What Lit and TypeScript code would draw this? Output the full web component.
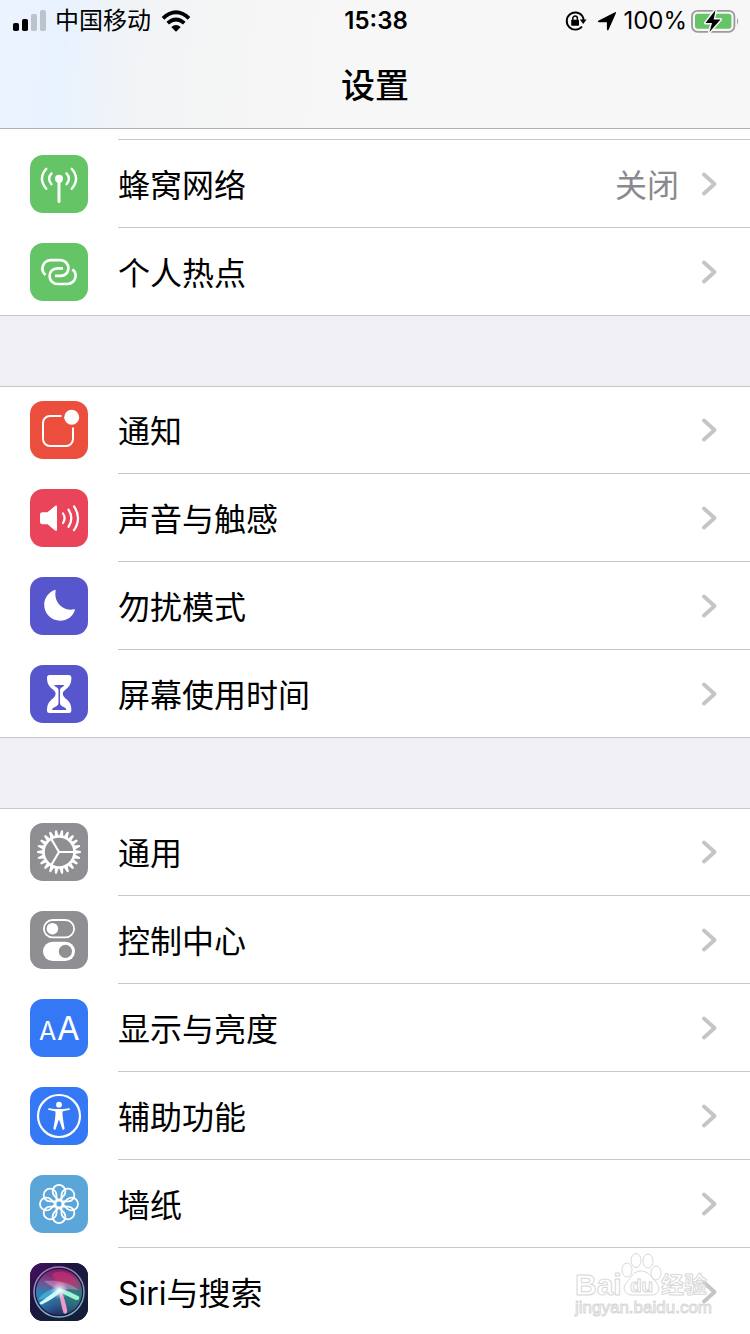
import { LitElement, html, svg, css, nothing, type TemplateResult } from "lit";
import { customElement, property } from "lit/decorators.js";

type Glyph = TemplateResult;

interface Item {
  label: string;
  tone: string;
  icon: Glyph;
  value?: string;
}

const teeth = Array.from({ length: 22 }, (_, i) => (i * 360) / 22);
const petals = Array.from({ length: 8 }, (_, i) => i * 45);

const icons: Record<string, Glyph> = {
  cellular: svg`
    <g fill="none" stroke="#fff" stroke-width="2.4" stroke-linecap="round">
      <path d="M29 25V46.6" stroke-width="3"/>
      <path d="M21.5 18.4Q16.8 23.7 21.5 29.2M16.3 13.8Q7.6 23.7 16.3 33.8"/>
      <path d="M36.5 18.4Q41.2 23.7 36.5 29.2M41.7 13.8Q50.4 23.7 41.7 33.8"/>
    </g>
    <circle cx="29" cy="23.8" r="4" fill="#fff"/>`,
  hotspot: svg`
    <g fill="none" stroke="#fff" stroke-width="2.7">
      <path d="M15.6 31.8C13.2 30 12.2 27.4 12.4 24.8C12.8 20.5 16.2 17.2 20.6 17.2H30.4C35 17.2 38.4 20.8 38.4 25.2C38.4 29.6 35.2 32.9 30.6 32.9H25"/>
      <path transform="rotate(180 29 29.1)" d="M15.6 31.8C13.2 30 12.2 27.4 12.4 24.8C12.8 20.5 16.2 17.2 20.6 17.2H30.4C35 17.2 38.4 20.8 38.4 25.2C38.4 29.6 35.2 32.9 30.6 32.9H25"/>
    </g>`,
  notifications: svg`
    <path d="M31.5 15H20a7 7 0 0 0-7 7V38a7 7 0 0 0 7 7H36a7 7 0 0 0 7-7V26.5" fill="none" stroke="#fff" stroke-width="2"/>
    <circle cx="41.7" cy="16.3" r="7.5" fill="#fff"/>`,
  sounds: svg`
    <path d="M12.5 23.3H17.5L25 17Q27 15.8 27 18V40.5Q27 42.7 25 41.5L17.5 35.2H12.5Q10 35.2 10 33V25.5Q10 23.3 12.5 23.3Z" fill="#fff"/>
    <g fill="none" stroke="#fff" stroke-width="2.2" stroke-linecap="round">
      <path d="M33 24.5Q36.2 29.2 33 34"/>
      <path d="M38.5 20.7Q44.2 29.2 38.5 37.8"/>
      <path d="M44 17.3Q52 29.2 44 41.2"/>
    </g>`,
  moon: svg`<path d="M24.6 13Q25.9 12.4 25.6 14C23.6 25 33 34.6 43.7 32.3Q45.3 32 44.8 33.5C42.6 39.6 37 43.7 30.3 43.7C21.4 43.7 14.2 36.7 14.2 27.8C14.2 21.2 18.6 15.2 24.6 13Z" fill="#fff"/>`,
  hourglass: svg`
    <path d="M19.5 10H39Q41.4 10 41.4 12.5C41.4 19 39.5 21.5 35.5 24.5Q32.8 26.5 32.8 29Q32.8 31.5 35.5 33.5C39.5 36.5 41.4 39 41.4 45.5Q41.4 48 39 48H19.5Q17 48 17 45.5C17 39 19 36.5 23 33.5Q25.6 31.5 25.6 29Q25.6 26.5 23 24.5C19 21.5 17 19 17 12.5Q17 10 19.5 10Z" fill="#fff"/>
    <path d="M24 20H34.4Q33.5 21.5 31.5 22.5Q30 23.5 30 25V38Q30 40.5 32.5 41.5Q36.5 43 36.3 45H22Q22 43 26 41.5Q28.5 40.5 28.5 38V25Q28.5 23.5 27 22.5Q25 21.5 24 20Z" fill="#5856cd"/>`,
  gear: svg`
    <g fill="#fff">
      ${teeth.map(
        (a) => svg`<path transform=${`rotate(${a} 29 29)`} d="M45 27L50.7 28Q51.4 29 50.7 30L45 31Z"/>`
      )}
    </g>
    <circle cx="29" cy="29" r="15.5" fill="none" stroke="#fff" stroke-width="2.6"/>
    <path d="M29 29H44M29 29L21.3 16M29 29L21.3 42" fill="none" stroke="#fff" stroke-width="2.2"/>`,
  toggles: svg`
    <rect x="13.9" y="9" width="30.2" height="17.4" rx="8.7" fill="none" stroke="#fff" stroke-width="1.8"/>
    <circle cx="22.4" cy="17.7" r="5.8" fill="#fff"/>
    <rect x="13" y="30.8" width="32" height="19.2" rx="9.6" fill="#fff"/>
    <circle cx="35.4" cy="40.4" r="6.6" fill="#8e8e93"/>`,
  letters: svg`
    <g class="letters" fill="#fff">
      <text x="9" y="41" font-size="25">A</text>
      <text x="27" y="41" font-size="33">A</text>
    </g>`,
  person: svg`
    <circle cx="29" cy="29" r="21" fill="none" stroke="#fff" stroke-width="2.2"/>
    <circle cx="29" cy="17.7" r="2.9" fill="#fff"/>
    <path d="M19 21.2Q29 23 39 21.2Q40.3 21.3 39.9 22.7L33 24.2Q32.4 24.5 32.5 26.5Q32.5 30 34.6 41.5Q34 43.2 32.5 42.5L29.4 33.2H28.6L25.5 42.5Q24 43.2 23.4 41.5Q25.5 30 25.5 26.5Q25.6 24.5 25 24.2L18.1 22.7Q17.7 21.3 19 21.2Z" fill="#fff"/>`,
  flower: svg`
    <g fill="none" stroke="#fff" stroke-width="1.8">
      <circle cx="29" cy="29" r="3.6"/>
      ${petals.map(
        (a) => svg`<path transform=${`rotate(${a} 29 29)`} d="M29 25.4L24.2 20.6A6.4 6.4 0 1 1 33.8 20.6Z"/>`
      )}
    </g>`,
  siri: svg`
    <defs>
      <linearGradient id="night" x1="0" y1="0" x2="1" y2="1">
        <stop offset="0" stop-color="#4b0f63"/><stop offset=".35" stop-color="#1d1440"/>
        <stop offset=".7" stop-color="#14203a"/><stop offset="1" stop-color="#151c36"/>
      </linearGradient>
      <linearGradient id="orb" x1=".5" y1="0" x2=".5" y2="1">
        <stop offset="0" stop-color="#7a1f68"/><stop offset=".35" stop-color="#953a80"/>
        <stop offset=".55" stop-color="#35689a"/><stop offset="1" stop-color="#262e6a"/>
      </linearGradient>
      <radialGradient id="teal" cx=".1" cy=".6" r=".5">
        <stop offset="0" stop-color="#2b86b8"/><stop offset="1" stop-color="#2b86b8" stop-opacity="0"/>
      </radialGradient>
      <radialGradient id="mint" cx=".85" cy=".6" r=".5">
        <stop offset="0" stop-color="#2c7f7a"/><stop offset="1" stop-color="#2c7f7a" stop-opacity="0"/>
      </radialGradient>
      <radialGradient id="glow">
        <stop offset="0" stop-color="#fff"/><stop offset=".3" stop-color="#e9f6ff" stop-opacity=".7"/>
        <stop offset="1" stop-color="#b8e6ff" stop-opacity="0"/>
      </radialGradient>
      <linearGradient id="ring" x1="0" y1="0" x2="0" y2="1">
        <stop offset="0" stop-color="#a578b0"/><stop offset="1" stop-color="#7fb3c9"/>
      </linearGradient>
    </defs>
    <rect width="58" height="58" fill="url(#night)"/>
    <circle cx="29" cy="29" r="23" fill="url(#orb)"/>
    <circle cx="29" cy="29" r="23" fill="url(#teal)"/>
    <circle cx="29" cy="29" r="23" fill="url(#mint)"/>
    <path d="M22 11C35 3 49 15 50 27C43 19 34 20 29 25Z" fill="#d8306f" opacity=".55"/>
    <path d="M14 18C25 17 38 18 49 27C41 26 34 26 29 28C24 24 18 22 14 18Z" fill="#e9a0cf" opacity=".45"/>
    <path d="M29 25C20 25 12 30 8 37C14 36 24 34 29 28Z" fill="#59cdf0" opacity=".5"/>
    <path d="M29 25.5L9.5 39.8Q9.5 42.3 12.3 41.3Q24 35.5 31 29Z" fill="#c9fbff"/>
    <path d="M28.5 26Q30.5 40 33.5 50Q37 52 37.3 48Q35 36 31 27Z" fill="#ef9aca"/>
    <path d="M29 25Q39 28 49 33.5Q50 37.5 46 37Q37 33 29 28.5Z" fill="#9df5d0"/>
    <circle cx="29.5" cy="27.5" r="9" fill="url(#glow)"/>
    <circle cx="29" cy="29" r="25" fill="none" stroke="url(#ring)" stroke-width="1.5"/>`,
};

const groups: Item[][] = [
  [
    { label: "蜂窝网络", tone: "green", icon: icons.cellular, value: "关闭" },
    { label: "个人热点", tone: "green", icon: icons.hotspot },
  ],
  [
    { label: "通知", tone: "red", icon: icons.notifications },
    { label: "声音与触感", tone: "pink", icon: icons.sounds },
    { label: "勿扰模式", tone: "indigo", icon: icons.moon },
    { label: "屏幕使用时间", tone: "indigo", icon: icons.hourglass },
  ],
  [
    { label: "通用", tone: "gray", icon: icons.gear },
    { label: "控制中心", tone: "gray", icon: icons.toggles },
    { label: "显示与亮度", tone: "blue", icon: icons.letters },
    { label: "辅助功能", tone: "blue", icon: icons.person },
    { label: "墙纸", tone: "sky", icon: icons.flower },
    { label: "Siri与搜索", tone: "night", icon: icons.siri },
  ],
];

@customElement("status-bar")
class StatusBar extends LitElement {
  static styles = css`
    :host {
      display: grid;
      grid-template-columns: 1fr auto 1fr;
      align-items: center;
      height: 40px;
      padding: 0 11px 0 13px;
      font-size: 24px;
      line-height: 40px;
    }
    .side {
      display: flex;
      align-items: center;
    }
    .left {
      gap: 9px;
    }
    .right {
      justify-content: flex-end;
      gap: 4px;
    }
    .text {
      padding-top: 1px;
    }
    .time {
      font-weight: 600;
    }
    .lock {
      margin-right: 6px;
    }
    .arrow {
      margin-right: 2px;
    }
    svg {
      display: block;
      flex: none;
    }
  `;

  render() {
    return html`
      <div class="side left">
        <svg width="33" height="22" viewBox="0 0 33 22" aria-hidden="true">
          <rect y="13" width="6" height="8" rx="1.8" />
          <rect x="9" y="9" width="6" height="12" rx="1.8" />
          <rect x="18" y="4" width="6" height="17" rx="1.8" fill="#bcc3cd" />
          <rect x="27" y="0" width="6" height="21" rx="1.8" fill="#bcc3cd" />
        </svg>
        <span class="text">中国移动</span>
        <svg width="32" height="22" viewBox="0 0 32 22" aria-hidden="true">
          <g fill="none" stroke="#000" stroke-width="3.8">
            <path d="M3 8.3Q16 -3.6 29 8.3" />
            <path d="M7.7 13.2Q16 5.8 24.3 13.2" />
          </g>
          <path d="M11.3 17Q16 13 20.7 17L16.6 21.2Q16 21.7 15.4 21.2Z" />
        </svg>
      </div>
      <span class="text time">15:38</span>
      <div class="side right">
        <svg class="lock" width="22" height="20" viewBox="0 0 22 20" aria-hidden="true">
          <path d="M17.3 5A8.6 8.6 0 1 0 17 15.5M17.3 5Q18.6 7 18.6 9.5" fill="none" stroke="#000" stroke-width="1.9" />
          <path d="M14.8 8.6H21.6L18.2 13Z" />
          <rect x="6.2" y="8.8" width="7.8" height="6" rx=".8" />
          <path d="M7.8 9V7.3a2.3 2.3 0 0 1 4.6 0V9" fill="none" stroke="#000" stroke-width="1.5" />
        </svg>
        <svg class="arrow" width="20" height="20" viewBox="0 0 20 20" aria-hidden="true">
          <path d="M1.3 9.7L18 1.2Q19.4 .8 18.9 2.2L11.6 18.8Q10.4 20.3 9.9 18.3V11.2H2.1Q0 10.9 1.3 9.7Z" />
        </svg>
        <span class="text">100%</span>
        <svg width="48" height="24" viewBox="0 0 48 24" aria-hidden="true">
          <rect x="1" y="1.8" width="42.4" height="21" rx="5.5" fill="none" stroke="#9b9b9b" stroke-width="1.8" />
          <rect x="4" y="4.8" width="36.4" height="15" rx="2.8" fill="#65c466" />
          <path d="M46 8.5Q48.2 12.3 46 16Z" fill="#9b9b9b" />
          <path d="M24.5 1L14.5 14H21L18.5 23L29.5 10.5H22.7Z" fill="#000" stroke="#f7f7f7" stroke-width="3" stroke-linejoin="round" paint-order="stroke" />
        </svg>
      </div>
    `;
  }
}

@customElement("settings-row")
class SettingsRow extends LitElement {
  @property({ attribute: false }) item!: Item;

  static styles = css`
    :host {
      display: block;
    }
    .row {
      display: flex;
      align-items: center;
      height: 88px;
      padding-left: 30px;
      color: #000;
      text-decoration: none;
    }
    .tile {
      display: block;
      flex: none;
      width: 58px;
      height: 58px;
      margin-right: 30px;
      border-radius: 13px;
      overflow: hidden;
    }
    .letters {
      font-family: Inter, sans-serif;
      font-weight: 400;
    }
    .green { background: #65c466; }
    .red { background: #eb4e3d; }
    .pink { background: #ea445a; }
    .indigo { background: #5856cd; }
    .gray { background: #8e8e93; }
    .blue { background: #3478f6; }
    .sky { background: #5aa6d8; }
    .night { background: #1d1440; }
    .body {
      display: flex;
      flex: 1;
      align-items: center;
      height: 88px;
      padding: 4px 33px 0 0;
      box-sizing: border-box;
      font-size: 32px;
      line-height: 48px;
      box-shadow: inset 0 -1px var(--line);
    }
    :host([last]) .body {
      box-shadow: none;
    }
    .label {
      flex: 1;
    }
    .value {
      margin-right: 22px;
      color: #8a8a8e;
    }
    .chevron {
      flex: none;
      margin-bottom: 4px;
    }
  `;

  render() {
    const { label, tone, icon, value } = this.item;
    return html`
      <a class="row" href="#">
        <svg class="tile ${tone}" viewBox="0 0 58 58" aria-hidden="true">${icon}</svg>
        <span class="body">
          <span class="label">${label}</span>
          ${value ? html`<span class="value">${value}</span>` : nothing}
          <svg class="chevron" width="16" height="24" viewBox="0 0 16 24" aria-hidden="true">
            <path d="M3 2.5L13.5 12L3 21.5" fill="none" stroke="#c5c5c7" stroke-width="3.8" stroke-linecap="round" stroke-linejoin="round" />
          </svg>
        </span>
      </a>
    `;
  }
}

@customElement("app-root")
class AppRoot extends LitElement {
  static styles = css`
    :host {
      --line: #c6c6c8;
      display: block;
      position: relative;
      height: 100vh;
      overflow: hidden;
      background: #fff;
      color: #000;
      font-family: Inter, "Noto Sans CJK SC", sans-serif;
    }
    .header {
      border-bottom: 1px solid #b2b2b4;
      background: linear-gradient(95deg, #ebf3fe 0%, #e8f2fe 9%, #eff3f8 15%, #f3f4f5 22%, #f7f7f7 44%);
    }
    .title {
      box-sizing: border-box;
      margin: 0;
      height: 88px;
      padding-top: 2px;
      font-size: 34px;
      font-weight: 500;
      line-height: 88px;
      text-align: center;
    }
    .tail {
      height: 11px;
      margin-left: 118px;
      box-shadow: inset 0 -1px var(--line);
    }
    .groups {
      display: flex;
      flex-direction: column;
      gap: 70px;
      background: #f0eff5;
    }
    .group {
      background: #fff;
      box-shadow: inset 0 -1px var(--line);
    }
    .group + .group {
      box-shadow: inset 0 1px var(--line), inset 0 -1px var(--line);
    }
    .list {
      margin: 0;
      padding: 0;
      list-style: none;
    }
    .watermark {
      position: absolute;
      right: 36px;
      bottom: 10px;
      pointer-events: none;
    }
    .mark {
      fill: none;
      stroke: #d8d8d8;
      stroke-width: 1px;
      stroke-linejoin: round;
      font-family: "Liberation Sans", "Noto Sans CJK SC", sans-serif;
      font-weight: 700;
    }
    .site {
      font-weight: 400;
    }
  `;

  render() {
    return html`
      <header class="header">
        <status-bar></status-bar>
        <h1 class="title">设置</h1>
      </header>
      <main class="groups">
        ${groups.map(
          (items, g) => html`
            <section class="group">
              ${g === 0 ? html`<div class="tail"></div>` : nothing}
              <ul class="list">
                ${items.map(
                  (item, i) => html`
                    <li><settings-row .item=${item} ?last=${i === items.length - 1}></settings-row></li>
                  `
                )}
              </ul>
            </section>
          `
        )}
      </main>
      <svg class="watermark" width="140" height="74" viewBox="0 0 140 74" aria-hidden="true">
        <g class="mark">
          <ellipse cx="53" cy="20" rx="5" ry="7" />
          <ellipse cx="62" cy="10.5" rx="5" ry="7" />
          <ellipse cx="74" cy="11" rx="5" ry="7" />
          <ellipse cx="82" cy="23" rx="5" ry="7" />
          <path d="M67 21C59 21 57 28 53 32C47 38 51 45 58 45H78C85 45 87 38 82 32C78 28 75 21 67 21Z" />
          <text x="1" y="45" font-size="30">Bai</text>
          <text x="56" y="42" font-size="19">du</text>
          <text x="87" y="43" font-size="23">经验</text>
          <text class="site" x="1" y="63" font-size="17">jingyan.baidu.com</text>
        </g>
      </svg>
    `;
  }
}
